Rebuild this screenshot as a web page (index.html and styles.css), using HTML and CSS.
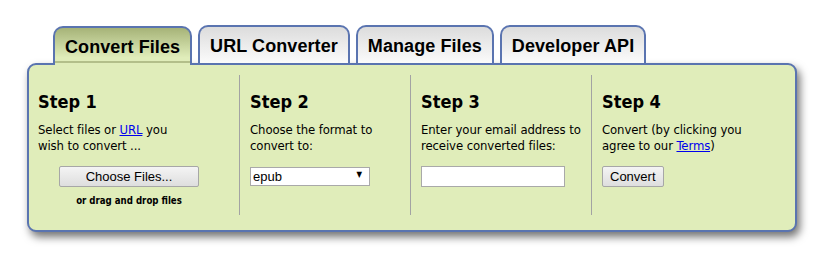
FILE: index.html
```html
<!DOCTYPE html>
<html lang="en">
<head>
    <meta charset="UTF-8">
    <title>Online Converter</title>
    <link rel="stylesheet" href="styles.css">
</head>
<body>
    <div class="wrapper">
        <!-- Tabs -->
        <div class="tabs">
            <div class="tab active">Convert Files</div>
            <div class="tab">URL Converter</div>
            <div class="tab">Manage Files</div>
            <div class="tab">Developer API</div>
        </div>

        <!-- Steps panel -->
        <div class="panel">
            <div class="steps">
                <div class="step step-one">
                    <h3>Step 1</h3>
                    <p>Select files or <a href="#">URL</a> you wish to convert ...</p>
                    <div class="upload">
                        <button class="btn btn-wide">Choose Files...</button>
                        <div class="drop-note">or drag and drop files</div>
                    </div>
                </div>
                <div class="step step-two">
                    <h3>Step 2</h3>
                    <p>Choose the format to convert to:</p>
                    <div class="select-box">
                        <select>
                            <option>epub</option>
                            <option>mobi</option>
                            <option>pdf</option>
                        </select>
                    </div>
                </div>
                <div class="step step-three">
                    <h3>Step 3</h3>
                    <p>Enter your email address to receive converted files:</p>
                    <input type="text" class="email">
                </div>
                <div class="step step-four">
                    <h3>Step 4</h3>
                    <p>Convert (by clicking you agree to our <a href="#">Terms</a>)</p>
                    <button class="btn">Convert</button>
                </div>
            </div>
        </div>
    </div>
</body>
</html>
```

FILE: styles.css
```css
/* General styles */
body {
    margin: 0;
    background: white;
    font-family: "DejaVu Sans Condensed", "DejaVu Sans", sans-serif;
    font-stretch: condensed;
}
.wrapper {
    padding: 25px 0 30px 27px;
}

/* Tabs */
.tabs {
    display: flex;
    align-items: flex-end;
    gap: 6px;
    margin-left: 26px;
    height: 38px;
}
.tab {
    padding: 3px 10px 0;
    box-sizing: border-box;
    height: 38px;
    line-height: 33px;
    border: 2px solid #5a74b0;
    border-bottom: none;
    border-radius: 10px 10px 0 0;
    background: linear-gradient(#dcdcdc, #fbfbfb);
    font-family: "Liberation Sans", Arial, sans-serif;
    font-stretch: normal;
    font-size: 18px;
    font-weight: bold;
    letter-spacing: 0.08px;
    color: black;
}
.tab.active {
    position: relative;
    z-index: 1;
    height: 39px;
    margin-bottom: -2px;
    background: linear-gradient(#a6b378, #e0edba 80%);
    box-shadow: inset 0 -2px 0 #e0edba, inset 0 -4px 0 #b3bf8a;
}

/* Panel */
.panel {
    width: 770px;
    height: 169px;
    box-sizing: border-box;
    background-color: #e0edba;
    border: 2px solid #5a74b0;
    border-radius: 9px;
    box-shadow: 3px 5px 9px rgba(0, 0, 0, 0.55);
}
.steps {
    display: flex;
    margin-top: 10px;
    height: 140px;
}
.step {
    box-sizing: border-box;
    padding: 16px 0 0 10px;
    border-right: 1px solid #a3a3a3;
}
.step-one {
    width: 211px;
    padding-left: 9px;
}
.step-two {
    width: 171px;
}
.step-three {
    width: 181px;
}
.step-four {
    flex: 1;
    border-right: none;
}
.step h3 {
    margin: 0;
    font-size: 18px;
    line-height: 22px;
    font-weight: bold;
    color: black;
}
.step p {
    margin: 9px 0 12px;
    max-width: 150px;
    font-size: 13px;
    line-height: 16px;
    letter-spacing: -0.1px;
    color: black;
}
.step-three p {
    max-width: 170px;
}
.step a {
    color: #0000ee;
}

/* Controls */
.upload {
    width: 182px;
    text-align: center;
}
.btn {
    height: 21px;
    padding: 0 7px;
    border: 1px solid #a7a7a7;
    border-radius: 2px;
    background: linear-gradient(#f4f4f4, #dedede);
    font-family: "Liberation Sans", Arial, sans-serif;
    font-size: 13px;
    color: black;
}
.btn-wide {
    width: 140px;
}
.drop-note {
    margin-top: 8px;
    font-size: 9.6px;
    line-height: 12px;
    font-weight: bold;
}
.select-box {
    position: relative;
    width: 120px;
}
.select-box select {
    width: 120px;
    height: 19px;
    padding: 0 2px;
    border: 1px solid #a9a9a9;
    border-radius: 0;
    background: white;
    appearance: none;
    font-family: "Liberation Sans", Arial, sans-serif;
    font-size: 13px;
    color: black;
}
.select-box::after {
    content: "\25BC";
    position: absolute;
    right: 8px;
    top: 4px;
    font-size: 8px;
    color: black;
    pointer-events: none;
}
.email {
    width: 144px;
    height: 21px;
    box-sizing: border-box;
    border: 1px solid #a9a9a9;
    background: white;
    padding: 0 3px;
}
```
